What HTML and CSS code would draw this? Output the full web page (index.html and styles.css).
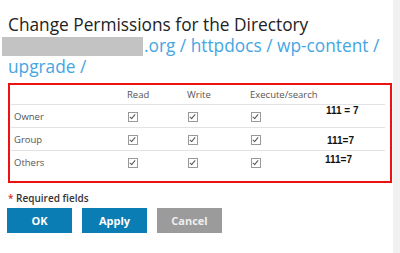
FILE: index.html
```html
<!DOCTYPE html>
<html>
<head>
<meta charset="utf-8">
<link rel="stylesheet" href="styles.css">
</head>
<body>
<div class="page">
  <main class="main">
    <h1 class="title">Change Permissions for the Directory<br><span class="redact"></span><span class="path">.org / httpdocs / wp-content /<br>upgrade /</span></h1>
    <div class="perm-box">
      <div class="perm-grid">
        <div class="cell head"></div>
        <div class="cell head">Read</div>
        <div class="cell head">Write</div>
        <div class="cell head">Execute/search</div>

        <div class="cell label">Owner</div>
        <div class="cell"><span class="cb"></span></div>
        <div class="cell"><span class="cb"></span></div>
        <div class="cell"><span class="cb"></span></div>

        <div class="cell label">Group</div>
        <div class="cell"><span class="cb"></span></div>
        <div class="cell"><span class="cb"></span></div>
        <div class="cell"><span class="cb"></span></div>

        <div class="cell label last">Others</div>
        <div class="cell last"><span class="cb"></span></div>
        <div class="cell last"><span class="cb"></span></div>
        <div class="cell last"><span class="cb"></span></div>
      </div>
      <span class="note note1">111 = 7</span>
      <span class="note note2">111=7</span>
      <span class="note note3">111=7</span>
    </div>
    <p class="required"><span class="star">*</span> Required fields</p>
    <div class="buttons">
      <button class="btn btn-primary">OK</button>
      <button class="btn btn-primary">Apply</button>
      <button class="btn btn-muted">Cancel</button>
    </div>
  </main>
  <aside class="strip"></aside>
</div>
</body>
</html>
```
FILE: styles.css
```css
html, body {
  margin: 0;
  padding: 0;
  background: #ffffff;
}
body {
  font-family: "Open Sans", "Liberation Sans", sans-serif;
  width: 400px;
  height: 253px;
  overflow: hidden;
}
.page {
  display: flex;
  height: 253px;
}
.main {
  flex: 1;
  min-width: 0;
  padding: 14px 0 0 8px;
}
.strip {
  width: 7px;
  background: #f1f1f1;
}
.title {
  margin: 0;
  font-size: 17.3px;
  line-height: 21px;
  font-weight: 400;
  color: #222222;
}
.redact {
  display: inline-block;
  width: 141px;
  height: 19px;
  margin-left: -6px;
  margin-right: 1px;
  background: #c3c3c3;
  vertical-align: -4px;
}
.path {
  color: #45a6e3;
}
.perm-box {
  position: relative;
  margin-top: 6px;
  width: 374px;
  height: 96px;
  border: 2px solid #ee1111;
  padding: 0 5px 0 1px;
  box-sizing: content-box;
}
.perm-grid {
  display: grid;
  grid-template-columns: 116px 60px 63px 135px;
  font-size: 9.5px;
  color: #555555;
}
.cell {
  display: flex;
  align-items: center;
  border-bottom: 1px solid #e2e2e2;
  height: 22px;
}
.cell.head {
  height: 19px;
}
.cell.label {
  padding-left: 3px;
}
.cell.last {
  border-bottom: none;
}
.cb {
  display: inline-block;
  position: relative;
  width: 8px;
  height: 8px;
  border: 1px solid #999999;
  margin-left: 1px;
  margin-top: 2px;
}
.cb::after {
  content: "";
  position: absolute;
  left: 2px;
  top: 0px;
  width: 2px;
  height: 5px;
  border-right: 1px solid #555;
  border-bottom: 1px solid #555;
  transform: rotate(40deg);
}
.note {
  position: absolute;
  font-family: "Liberation Sans", Arial, sans-serif;
  font-weight: 700;
  font-size: 10px;
  line-height: 10px;
  color: #111111;
}
.note1 { left: 316px; top: 21px; }
.note2 { left: 317px; top: 51px; }
.note3 { left: 315px; top: 70px; }
.required {
  margin: 8px 0 0 0;
  font-size: 10px;
  line-height: 14px;
  font-weight: 600;
  color: #333333;
}
.star {
  color: #d9302a;
}
.buttons {
  display: flex;
  gap: 10px;
  margin-top: 3px;
  margin-left: -1px;
}
.btn {
  width: 65px;
  height: 25px;
  border: none;
  padding: 0;
  font-family: "Open Sans", "Liberation Sans", sans-serif;
  font-size: 11px;
  font-weight: 700;
  color: #ffffff;
}
.btn-primary {
  background: #0a7db4;
}
.btn-muted {
  background: #9b9b9b;
  color: #eeeeee;
}
```
